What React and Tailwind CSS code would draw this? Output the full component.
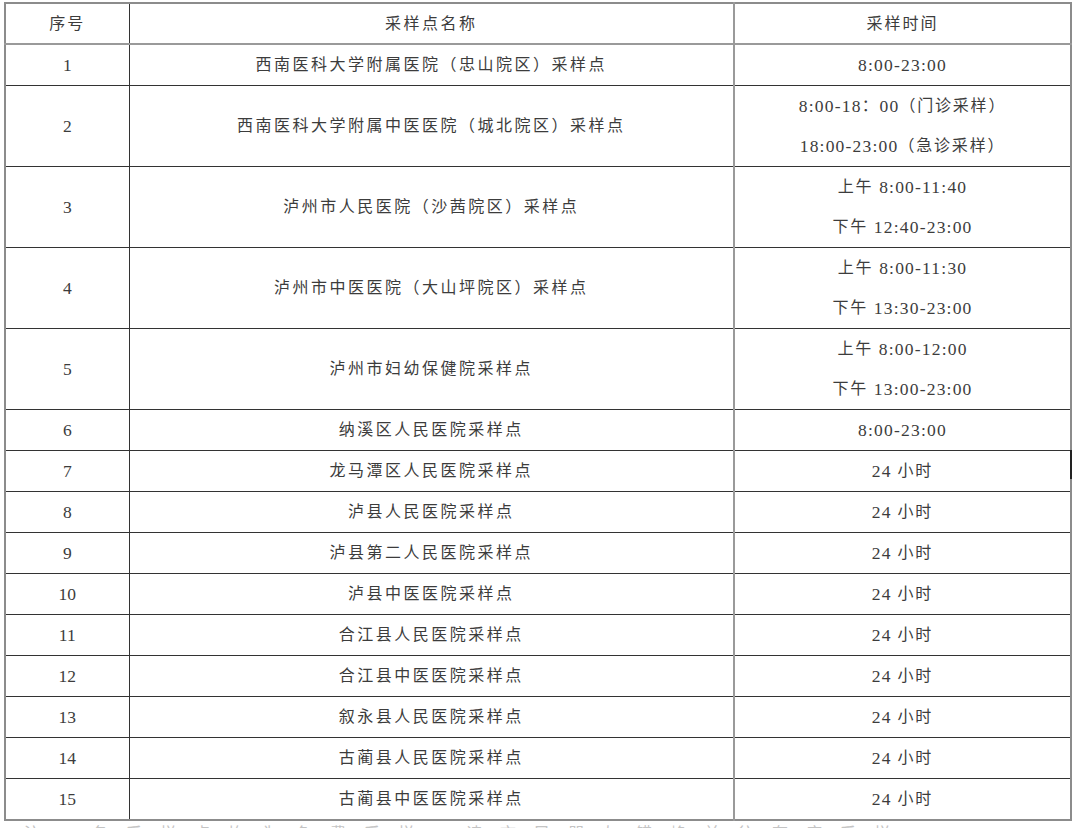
const rows = [
  { no: "1", name: "西南医科大学附属医院（忠山院区）采样点", time: ["8:00-23:00"] },
  { no: "2", name: "西南医科大学附属中医医院（城北院区）采样点", time: ["8:00-18：00（门诊采样）", "18:00-23:00（急诊采样）"] },
  { no: "3", name: "泸州市人民医院（沙茜院区）采样点", time: ["上午 8:00-11:40", "下午 12:40-23:00"] },
  { no: "4", name: "泸州市中医医院（大山坪院区）采样点", time: ["上午 8:00-11:30", "下午 13:30-23:00"] },
  { no: "5", name: "泸州市妇幼保健院采样点", time: ["上午 8:00-12:00", "下午 13:00-23:00"] },
  { no: "6", name: "纳溪区人民医院采样点", time: ["8:00-23:00"] },
  { no: "7", name: "龙马潭区人民医院采样点", time: ["24 小时"] },
  { no: "8", name: "泸县人民医院采样点", time: ["24 小时"] },
  { no: "9", name: "泸县第二人民医院采样点", time: ["24 小时"] },
  { no: "10", name: "泸县中医医院采样点", time: ["24 小时"] },
  { no: "11", name: "合江县人民医院采样点", time: ["24 小时"] },
  { no: "12", name: "合江县中医医院采样点", time: ["24 小时"] },
  { no: "13", name: "叙永县人民医院采样点", time: ["24 小时"] },
  { no: "14", name: "古蔺县人民医院采样点", time: ["24 小时"] },
  { no: "15", name: "古蔺县中医医院采样点", time: ["24 小时"] },
];

const font = { fontFamily: '"Liberation Serif", "Noto Sans CJK SC", serif' };

// latin digits are set a little larger than the CJK text, as in the source document
function Mixed({ text }) {
  const parts = text.split(/([0-9:\-]+)/);
  return parts.map((p, i) =>
    /^[0-9:\-]+$/.test(p) ? (
      <span key={i} className="text-[17.5px] tracking-[1.2px] whitespace-pre">{p}</span>
    ) : (
      <span key={i} className="whitespace-pre">{p}</span>
    )
  );
}

export default function App() {
  return (
    <div className="relative w-[1080px] h-[828px] overflow-hidden bg-white text-[#3c3c3c] text-[16px]" style={font}>
      <div className="pt-[2px] pl-[4px]">
        <table className="border-collapse table-fixed w-[1066px] border-2 border-[#8c8c8c]">
          <colgroup>
            <col className="w-[124px]" />
            <col className="w-[605px]" />
            <col className="w-[337px]" />
          </colgroup>
          <thead>
            <tr className="h-[41px] border-b-2 border-[#9a9a9a]">
              <th className="p-0 font-normal text-center tracking-[2px] border-r border-[#333]">序号</th>
              <th className="p-0 font-normal text-center tracking-[2.5px] border-r-2 border-[#9a9a9a]">采样点名称</th>
              <th className="p-0 font-normal text-center tracking-[2px]">采样时间</th>
            </tr>
          </thead>
          <tbody>
            {rows.map((r) => (
              <tr key={r.no} className="border-b border-[#333]">
                <td className="p-0 text-center text-[17.5px] border-r border-[#333]">{r.no}</td>
                <td className="p-0 text-center tracking-[2.5px] border-r-2 border-[#9a9a9a]">{r.name}</td>
                <td className="p-0 text-center tracking-[1.8px]">
                  {r.time.map((t) => (
                    <div key={t} className="h-[40px] flex items-center justify-center">
                      <Mixed text={t} />
                    </div>
                  ))}
                </td>
              </tr>
            ))}
          </tbody>
        </table>
        <p className="mt-[3px] pl-[20px] text-[#c4c4c4] tracking-[18px] whitespace-nowrap leading-[20px]">
          注：各采样点均为免费采样，请市民朋友错峰前往有序采样
        </p>
      </div>
      <div className="absolute left-[1070px] top-[450px] w-[2px] h-[29px] bg-[#222]" />
    </div>
  );
}
